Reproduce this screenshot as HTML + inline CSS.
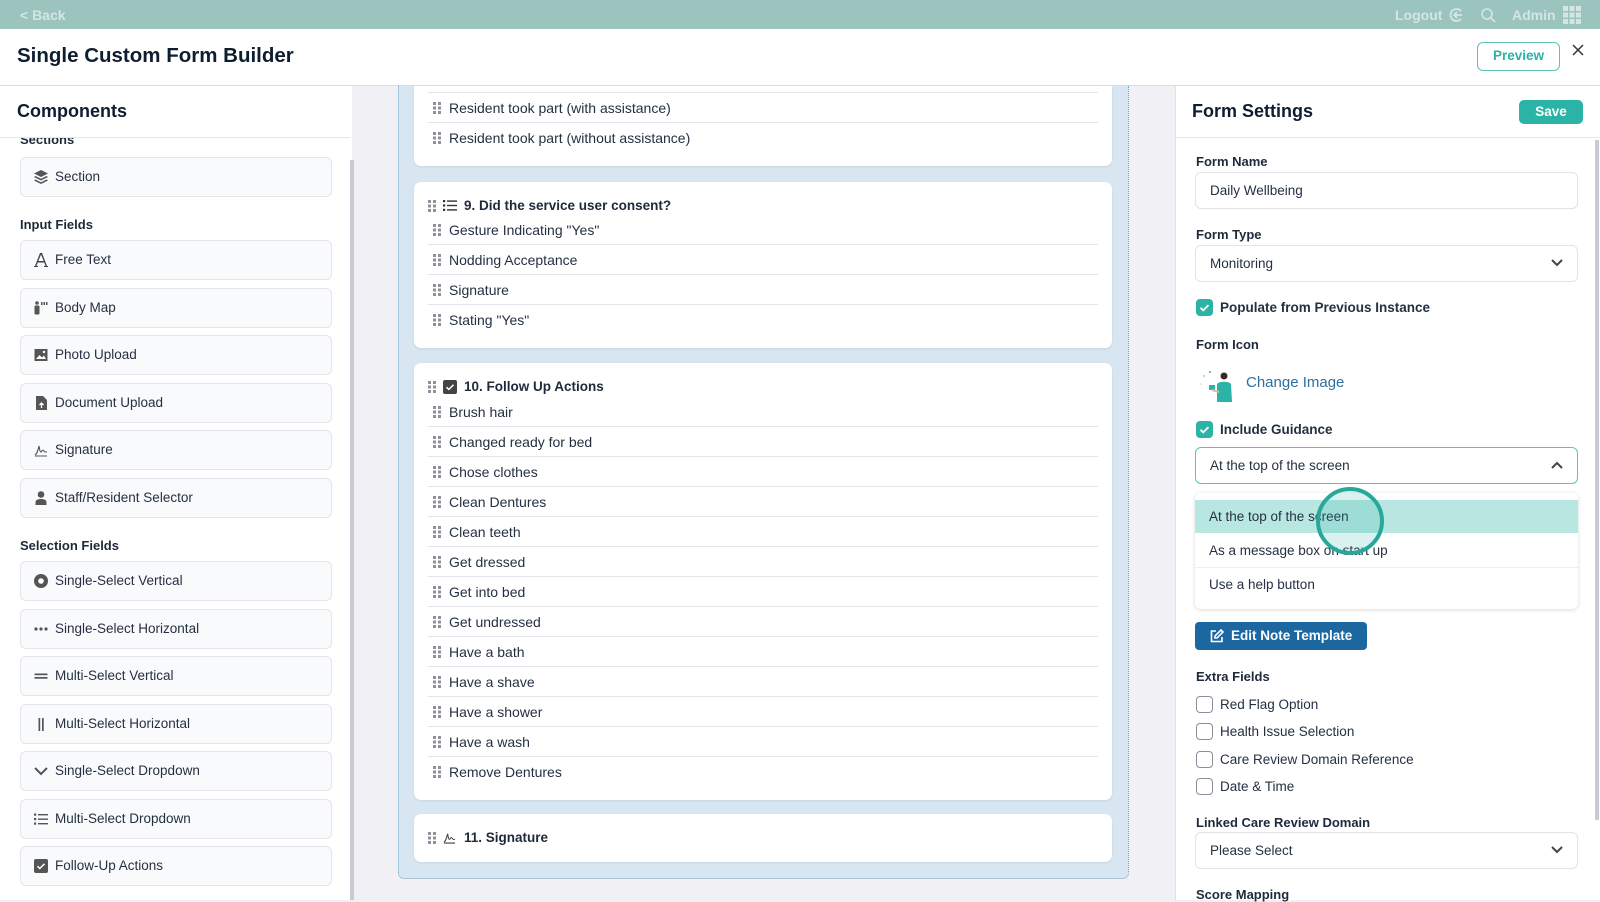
<!DOCTYPE html>
<html><head><meta charset="utf-8">
<style>
*{box-sizing:border-box;margin:0;padding:0}
body{width:1600px;height:900px;overflow:hidden;font-family:"Liberation Sans",sans-serif;background:#f0f0f5;position:relative;color:#1e2a3a}
.a{position:absolute}
.top{left:0;top:0;width:1600px;height:29px;background:#9cc4bf}
.tt{color:#d3e6e3;font-size:14px;font-weight:bold;top:7px}
.hdr{left:0;top:29px;width:1600px;height:57px;background:#fff;border-bottom:1px solid #dcdde3}
.lp{left:0;top:86px;width:352px;height:814px;background:#fff}
.lpb{left:350px;top:160px;width:4px;height:740px;background:#c8cad4}
.h2{font-size:18px;font-weight:bold;color:#0e1e30}
.lbl{font-size:13px;color:#1e2a3a;font-weight:bold;}
.it{left:20px;width:312px;height:40px;background:#f9fafb;border:1px solid #e3e5ea;border-radius:6px;font-size:13.5px;color:#253042;padding-left:34px;line-height:38px}
.it svg{position:absolute;left:13px;top:12px}
.cont{left:398px;top:86px;width:731px;height:793px;border:1px dotted #7ea6c2;border-top:none;background:#d7e6f0;border-radius:0 0 6px 6px}
.card{left:414px;width:698px;background:#fff;border-radius:7px;box-shadow:0 1px 2px rgba(0,0,0,.08)}
.row{left:428px;width:670px;height:30px;font-size:14px;color:#253042;padding-left:21px;line-height:30px}
.row.l{border-bottom:1px solid #e3e5ea}
.row svg{position:absolute;left:5px;top:9px}
.ct{font-size:13.5px;font-weight:bold;color:#1e2a3a}
.rp{left:1175px;top:86px;width:425px;height:814px;background:#fff;border-left:1px solid #e0e1e6}
.in{left:1195px;width:383px;height:37px;border:1px solid #e1e3e8;border-radius:6px;font-size:13.5px;color:#253042;padding-left:14px;line-height:35px;background:#fff}
.fl{font-size:13px;font-weight:bold;color:#1e2a3a;left:1196px}
.cb{left:1196px;width:17px;height:17px;border:1.5px solid #8a8f99;border-radius:4px;background:#fff}
.cbc{left:1196px;width:17px;height:17px;border-radius:4px;background:#2bb3a5}
.ck{font-size:13.5px;color:#253042;left:1220px}
.chev{position:absolute;right:14px;top:13px}
</style></head><body>
<svg width="0" height="0" style="position:absolute"><defs>
<g id="dr" fill="#8d919b"><rect x="0" y="0" width="3" height="3"/><rect x="5" y="0" width="3" height="3"/><rect x="0" y="4.5" width="3" height="3"/><rect x="5" y="4.5" width="3" height="3"/><rect x="0" y="9" width="3" height="3"/><rect x="5" y="9" width="3" height="3"/></g>
</defs></svg>

<div class="a top"></div>
<div class="a tt" style="left:20px">&lt; Back</div>
<div class="a tt" style="left:1395px">Logout</div>
<svg class="a" style="left:1448px;top:7px" width="16" height="16" viewBox="0 0 16 16" fill="none" stroke="#d3e6e3" stroke-width="1.8"><path d="M13 4A6 6 0 1 0 13 12"/><path d="M14 8H6M9 5L6 8l3 3"/></svg>
<svg class="a" style="left:1480px;top:7px" width="16" height="16" viewBox="0 0 16 16" fill="none" stroke="#d3e6e3" stroke-width="1.6"><circle cx="7" cy="7" r="5"/><path d="M11 11l4 4"/></svg>
<div class="a tt" style="left:1512px">Admin</div>
<svg class="a" style="left:1563px;top:6px" width="18" height="18" viewBox="0 0 18 18" fill="#d3e6e3"><rect x="0" y="0" width="5" height="5"/><rect x="6.5" y="0" width="5" height="5"/><rect x="13" y="0" width="5" height="5"/><rect x="0" y="6.5" width="5" height="5"/><rect x="6.5" y="6.5" width="5" height="5"/><rect x="13" y="6.5" width="5" height="5"/><rect x="0" y="13" width="5" height="5"/><rect x="6.5" y="13" width="5" height="5"/><rect x="13" y="13" width="5" height="5"/></svg>

<div class="a hdr"></div>
<div class="a" style="left:17px;top:44px;font-size:20.5px;font-weight:bold;color:#0e1e30">Single Custom Form Builder</div>
<div class="a" style="left:1477px;top:42px;width:83px;height:29px;border:1.5px solid #5ec2b7;border-radius:6px;color:#2bb3a5;font-size:13.5px;font-weight:bold;text-align:center;line-height:26px">Preview</div>
<svg class="a" style="left:1572px;top:44px" width="12" height="12" viewBox="0 0 12 12" stroke="#333" stroke-width="1.5"><path d="M1 1l10 10M11 1L1 11"/></svg>

<!-- left panel -->
<div class="a lp"></div>
<div class="a" style="left:0;top:137px;width:350px;border-top:1px solid #e6e7eb"></div>
<div class="a lpb"></div>
<div class="a h2" style="left:17px;top:101px">Components</div>
<div class="a lbl" style="left:20px;top:132px;clip-path:inset(6px 0 0 0)">Sections</div>
<div class="a it" style="top:157px"><svg width="14" height="14" viewBox="0 0 14 14" fill="#555"><path d="M7 0L14 3.5 7 7 0 3.5z"/><path d="M1.5 6L7 8.8 12.5 6 14 7 7 10.5 0 7z"/><path d="M1.5 9.5L7 12.3 12.5 9.5 14 10.5 7 14 0 10.5z"/></svg>Section</div>
<div class="a lbl" style="left:20px;top:217px">Input Fields</div>
<div class="a it" style="top:240px"><svg width="14" height="14" viewBox="0 0 14 14" fill="#444"><path d="M6 0h2l5 13h2v1H10v-1h1.5l-1.3-3.5H3.8L2.5 13H4v1H-1v-1h2zM4.3 8h5.4L7 1.5z"/></svg>Free Text</div>
<div class="a it" style="top:287.5px"><svg width="14" height="14" viewBox="0 0 14 14" fill="#555"><circle cx="3" cy="2" r="1.8"/><rect x="0.5" y="4.5" width="5" height="9" rx="1"/><rect x="7" y="1" width="1.5" height="3"/><rect x="9.5" y="1" width="1.5" height="3"/><rect x="12" y="1" width="1.5" height="3"/></svg>Body Map</div>
<div class="a it" style="top:335px"><svg width="14" height="14" viewBox="0 0 14 14"><rect x="0.5" y="1" width="13" height="12" fill="#555"/><path d="M2 11l3.5-4 2.5 2.5 2-2L12 11z" fill="#fff"/><circle cx="10" cy="4" r="1.2" fill="#fff"/></svg>Photo Upload</div>
<div class="a it" style="top:382.5px"><svg width="14" height="14" viewBox="0 0 14 14"><path d="M2 0h7l4 4v10H2z" fill="#555"/><path d="M7.5 12V7M5.5 9l2-2 2 2" stroke="#fff" stroke-width="1.3" fill="none"/></svg>Document Upload</div>
<div class="a it" style="top:430px"><svg width="14" height="14" viewBox="0 0 14 14" fill="none" stroke="#555" stroke-width="1.1"><path d="M1 12c2-1 3-5 4-9 .5 3 1 6 2 6s1-2 2-2 1 2 2 2h2M1 13h12"/></svg>Signature</div>
<div class="a it" style="top:477.5px"><svg width="14" height="14" viewBox="0 0 14 14" fill="#555"><circle cx="7" cy="3.5" r="3.3"/><path d="M1.5 14v-2.5C1.5 9 3.5 8 7 8s5.5 1 5.5 3.5V14z"/></svg>Staff/Resident Selector</div>
<div class="a lbl" style="left:20px;top:538px">Selection Fields</div>
<div class="a it" style="top:561px"><svg width="14" height="14" viewBox="0 0 14 14"><circle cx="7" cy="7" r="7" fill="#555"/><circle cx="7" cy="7" r="2.8" fill="#fff"/></svg>Single-Select Vertical</div>
<div class="a it" style="top:608.5px"><svg width="14" height="14" viewBox="0 0 14 14" fill="#555"><circle cx="2" cy="7" r="1.6"/><circle cx="7" cy="7" r="1.6"/><circle cx="12" cy="7" r="1.6"/></svg>Single-Select Horizontal</div>
<div class="a it" style="top:656px"><svg width="14" height="14" viewBox="0 0 14 14" fill="#555"><rect x="0.5" y="4.5" width="13" height="1.7"/><rect x="0.5" y="8" width="13" height="1.7"/></svg>Multi-Select Vertical</div>
<div class="a it" style="top:703.5px"><svg width="14" height="14" viewBox="0 0 14 14" fill="#555"><rect x="4.5" y="1" width="1.7" height="13"/><rect x="8" y="1" width="1.7" height="13"/></svg>Multi-Select Horizontal</div>
<div class="a it" style="top:751px"><svg width="14" height="14" viewBox="0 0 14 14" fill="none" stroke="#555" stroke-width="2"><path d="M1 4l6 6 6-6"/></svg>Single-Select Dropdown</div>
<div class="a it" style="top:798.5px"><svg width="14" height="14" viewBox="0 0 14 14" fill="#555"><rect x="0" y="1.5" width="2.2" height="2.2"/><rect x="0" y="6" width="2.2" height="2.2"/><rect x="0" y="10.5" width="2.2" height="2.2"/><rect x="4" y="2" width="10" height="1.4"/><rect x="4" y="6.5" width="10" height="1.4"/><rect x="4" y="11" width="10" height="1.4"/></svg>Multi-Select Dropdown</div>
<div class="a it" style="top:846px"><svg width="14" height="14" viewBox="0 0 14 14"><rect width="14" height="14" rx="2" fill="#555"/><path d="M3.5 7.2l2.3 2.3 4.7-4.7" stroke="#fff" stroke-width="1.5" fill="none"/></svg>Follow-Up Actions</div>

<!-- middle -->
<div class="a cont"></div>
<div class="a card" style="top:86px;height:80px;border-radius:0 0 7px 7px"></div>
<div class="a" style="left:428px;top:92px;width:670px;border-top:1px solid #e3e5ea"></div>
<div class="a row l" style="top:93px"><svg width="8" height="12"><use href="#dr"/></svg>Resident took part (with assistance)</div>
<div class="a row" style="top:123px"><svg width="8" height="12"><use href="#dr"/></svg>Resident took part (without assistance)</div>

<div class="a card" style="top:182px;height:166px"></div>
<svg class="a" style="left:428px;top:200px" width="8" height="12"><use href="#dr"/></svg>
<svg class="a" style="left:443px;top:199px" width="14" height="13" viewBox="0 0 14 13" fill="#333"><rect x="0" y="1" width="2.2" height="2.2"/><rect x="0" y="5.4" width="2.2" height="2.2"/><rect x="0" y="9.8" width="2.2" height="2.2"/><rect x="4" y="1.4" width="10" height="1.4"/><rect x="4" y="5.8" width="10" height="1.4"/><rect x="4" y="10.2" width="10" height="1.4"/></svg>
<div class="a ct" style="left:464px;top:198px">9. Did the service user consent?</div>
<div class="a row l" style="top:215px"><svg width="8" height="12"><use href="#dr"/></svg>Gesture Indicating "Yes"</div>
<div class="a row l" style="top:245px"><svg width="8" height="12"><use href="#dr"/></svg>Nodding Acceptance</div>
<div class="a row l" style="top:275px"><svg width="8" height="12"><use href="#dr"/></svg>Signature</div>
<div class="a row" style="top:305px"><svg width="8" height="12"><use href="#dr"/></svg>Stating "Yes"</div>

<div class="a card" style="top:363px;height:437px"></div>
<svg class="a" style="left:428px;top:381px" width="8" height="12"><use href="#dr"/></svg>
<svg class="a" style="left:443px;top:380px" width="14" height="14" viewBox="0 0 14 14"><rect width="14" height="14" rx="2" fill="#444"/><path d="M3.5 7.2l2.3 2.3 4.7-4.7" stroke="#fff" stroke-width="1.5" fill="none"/></svg>
<div class="a ct" style="left:464px;top:379px">10. Follow Up Actions</div>
<div class="a row l" style="top:397px"><svg width="8" height="12"><use href="#dr"/></svg>Brush hair</div>
<div class="a row l" style="top:427px"><svg width="8" height="12"><use href="#dr"/></svg>Changed ready for bed</div>
<div class="a row l" style="top:457px"><svg width="8" height="12"><use href="#dr"/></svg>Chose clothes</div>
<div class="a row l" style="top:487px"><svg width="8" height="12"><use href="#dr"/></svg>Clean Dentures</div>
<div class="a row l" style="top:517px"><svg width="8" height="12"><use href="#dr"/></svg>Clean teeth</div>
<div class="a row l" style="top:547px"><svg width="8" height="12"><use href="#dr"/></svg>Get dressed</div>
<div class="a row l" style="top:577px"><svg width="8" height="12"><use href="#dr"/></svg>Get into bed</div>
<div class="a row l" style="top:607px"><svg width="8" height="12"><use href="#dr"/></svg>Get undressed</div>
<div class="a row l" style="top:637px"><svg width="8" height="12"><use href="#dr"/></svg>Have a bath</div>
<div class="a row l" style="top:667px"><svg width="8" height="12"><use href="#dr"/></svg>Have a shave</div>
<div class="a row l" style="top:697px"><svg width="8" height="12"><use href="#dr"/></svg>Have a shower</div>
<div class="a row l" style="top:727px"><svg width="8" height="12"><use href="#dr"/></svg>Have a wash</div>
<div class="a row" style="top:757px"><svg width="8" height="12"><use href="#dr"/></svg>Remove Dentures</div>

<div class="a card" style="top:814px;height:48px"></div>
<svg class="a" style="left:428px;top:832px" width="8" height="12"><use href="#dr"/></svg>
<svg class="a" style="left:443px;top:831px" width="13" height="13" viewBox="0 0 14 14" fill="none" stroke="#444" stroke-width="1.1"><path d="M1 12c2-1 3-5 4-9 .5 3 1 6 2 6s1-2 2-2 1 2 2 2h2M1 13h12"/></svg>
<div class="a ct" style="left:464px;top:830px">11. Signature</div>

<!-- right panel -->
<div class="a rp"></div>
<div class="a" style="left:1175px;top:137px;width:425px;border-top:1px solid #e6e7eb"></div>
<div class="a" style="left:1595px;top:140px;width:4px;height:680px;background:#c8cad4"></div>
<div class="a h2" style="left:1192px;top:101px">Form Settings</div>
<div class="a" style="left:1519px;top:100px;width:64px;height:24px;background:#2bb3a5;border-radius:5px;color:#fff;font-weight:bold;font-size:13.5px;text-align:center;line-height:24px">Save</div>

<div class="a fl" style="top:154px">Form Name</div>
<div class="a in" style="top:172px">Daily Wellbeing</div>
<div class="a fl" style="top:227px">Form Type</div>
<div class="a in" style="top:245px">Monitoring<svg class="chev" width="12" height="8" viewBox="0 0 12 8" fill="none" stroke="#444" stroke-width="2"><path d="M1 1l5 5 5-5"/></svg></div>
<div class="a cbc" style="top:299px"><svg width="17" height="17" viewBox="0 0 17 17"><path d="M4.5 8.7l2.7 2.7 5.3-5.3" stroke="#fff" stroke-width="1.8" fill="none"/></svg></div>
<div class="a ck" style="top:300px;font-weight:bold">Populate from Previous Instance</div>
<div class="a fl" style="top:337px">Form Icon</div>
<svg class="a" style="left:1198px;top:368px" width="38" height="34" viewBox="0 0 38 34"><circle cx="6" cy="8" r="1" fill="#9cd"/><circle cx="12" cy="4" r="1" fill="#2bb3a5"/><circle cx="3" cy="16" r="0.8" fill="#ccc"/><circle cx="26" cy="8" r="3.5" fill="#3a2a22"/><path d="M19 16c2-3 12-3 14 0l1 18H19z" fill="#2bb3a5"/><rect x="11" y="17" width="6" height="5" fill="#2bb3a5"/><path d="M14 22l7 2" stroke="#e2b99b" stroke-width="2"/></svg>
<div class="a" style="left:1246px;top:374px;font-size:15px;color:#2d6fa0">Change Image</div>
<div class="a cbc" style="top:421px"><svg width="17" height="17" viewBox="0 0 17 17"><path d="M4.5 8.7l2.7 2.7 5.3-5.3" stroke="#fff" stroke-width="1.8" fill="none"/></svg></div>
<div class="a ck" style="top:422px;font-weight:bold">Include Guidance</div>
<div class="a in" style="top:447px;border-color:#5ec2b7">At the top of the screen<svg class="chev" width="12" height="8" viewBox="0 0 12 8" fill="none" stroke="#444" stroke-width="2"><path d="M1 7l5-5 5 5"/></svg></div>
<div class="a" style="left:1195px;top:493px;width:383px;height:116px;background:#fff;border-radius:6px;box-shadow:0 1px 4px rgba(0,0,0,.15);overflow:hidden">
 <div style="position:absolute;left:0;top:7px;width:383px;height:33px;background:#b8e6e1"></div>
 <div style="position:absolute;left:0;top:74px;width:383px;border-top:1px solid #eee"></div>
 <div style="position:absolute;left:14px;top:16px;font-size:13.5px;color:#253042">At the top of the screen</div>
 <div style="position:absolute;left:14px;top:50px;font-size:13.5px;color:#253042">As a message box on start up</div>
 <div style="position:absolute;left:14px;top:84px;font-size:13.5px;color:#253042">Use a help button</div>
</div>
<div class="a" style="left:1316px;top:487px;width:68px;height:68px;border-radius:50%;border:4px solid #27a89a;background:rgba(43,179,165,.18)"></div>
<div class="a" style="left:1195px;top:622px;width:172px;height:28px;background:#1c67a0;border-radius:4px;color:#fff;font-weight:bold;font-size:13.5px;line-height:28px;padding-left:36px"><svg style="position:absolute;left:15px;top:7px" width="14" height="14" viewBox="0 0 14 14" fill="none" stroke="#fff" stroke-width="1.6"><path d="M6 2H1.5v10.5H12V8"/><path d="M11 1l2 2-6 6H5V7z"/></svg>Edit Note Template</div>
<div class="a fl" style="top:669px">Extra Fields</div>
<div class="a cb" style="top:696px"></div><div class="a ck" style="top:697px">Red Flag Option</div>
<div class="a cb" style="top:723px"></div><div class="a ck" style="top:724px">Health Issue Selection</div>
<div class="a cb" style="top:751px"></div><div class="a ck" style="top:752px">Care Review Domain Reference</div>
<div class="a cb" style="top:778px"></div><div class="a ck" style="top:779px">Date &amp; Time</div>
<div class="a fl" style="top:815px">Linked Care Review Domain</div>
<div class="a in" style="top:832px">Please Select<svg class="chev" width="12" height="8" viewBox="0 0 12 8" fill="none" stroke="#444" stroke-width="2"><path d="M1 1l5 5 5-5"/></svg></div>
<div class="a fl" style="top:887px">Score Mapping</div>
</body></html>
